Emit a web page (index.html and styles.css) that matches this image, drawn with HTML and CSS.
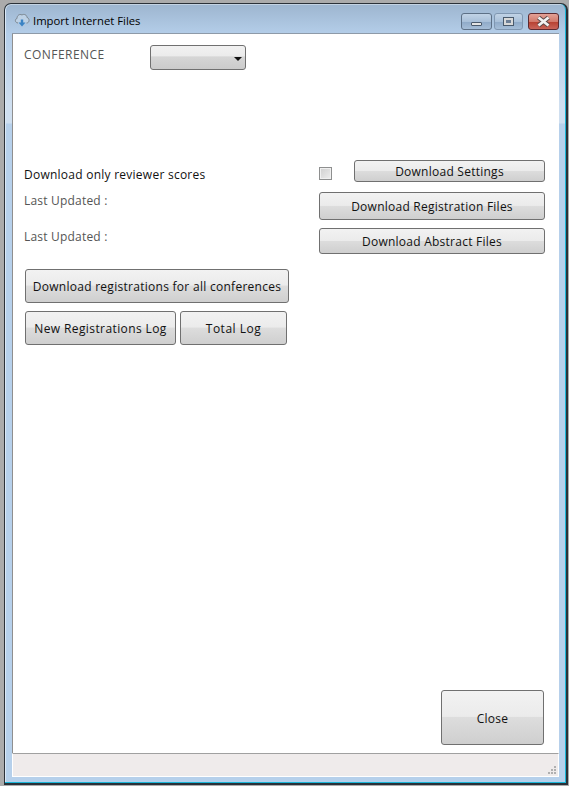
FILE: index.html
```html
<!DOCTYPE html>
<html lang="en">
<head>
    <meta charset="UTF-8">
    <meta name="viewport" content="width=device-width, initial-scale=1.0">
    <title>Import Internet Files</title>
    <link rel="stylesheet" href="styles.css">
</head>
<body>
    <div class="window">
        <div class="titlebar">
            <svg class="app-icon" width="16" height="16" viewBox="0 0 16 16">
                <path d="M4 11 C1 11 .5 7 3 6.5 C3 3.5 5.5 1.5 8 3 C10 1.5 13 3 13 5.500 C15.800 6 15.800 11 12.500 11" fill="#bdd1e5" stroke="#7b858e" stroke-width="1"/>
                <path d="M6.800 7.500 H9.200 V10.500 H11.500 L8 14.500 L4.500 10.500 H6.800 Z" fill="#3a83c4"/>
            </svg>
            <span class="title">Import Internet Files</span>
            <div class="caption-btns">
                <div class="cap-btn cap-min"><span class="min-glyph"></span></div>
                <div class="cap-btn cap-max"><span class="max-glyph"></span></div>
                <div class="cap-btn cap-close"><svg width="17" height="11" viewBox="0 0 17 11"><path d="M3.500 1.500 L13.500 9.500 M13.500 1.500 L3.500 9.500" stroke="#5a4a4a" stroke-width="4.600"/><path d="M3.500 1.500 L13.500 9.500 M13.500 1.500 L3.500 9.500" stroke="#f2f2f2" stroke-width="2.800"/></svg></div>
            </div>
        </div>

        <div class="client">
            <div class="content">
                <div class="conf-row">
                    <label class="label conf-label">CONFERENCE</label>
                    <div class="select"><span class="arrow"></span></div>
                </div>

                <div class="main-row">
                    <div class="left-col">
                        <div class="label-dark">Download only reviewer scores</div>
                        <div class="label updated-1">Last Updated :</div>
                        <div class="label updated-2">Last Updated :</div>
                    </div>
                    <div class="right-col">
                        <div class="settings-row">
                            <span class="checkbox"></span>
                            <button class="btn btn-settings">Download Settings</button>
                        </div>
                        <button class="btn btn-reg">Download Registration Files</button>
                        <button class="btn btn-abs">Download Abstract Files</button>
                    </div>
                </div>

                <div class="bulk">
                    <button class="btn btn-all">Download registrations for all conferences</button>
                    <div class="log-row">
                        <button class="btn btn-new">New Registrations Log</button>
                        <button class="btn btn-total">Total Log</button>
                    </div>
                </div>

                <div class="footer">
                    <button class="btn btn-close">Close</button>
                </div>
            </div>
            <div class="statusbar">
                <svg class="grip" width="10" height="10" viewBox="0 0 10 10" fill="#b0b0b0">
                    <rect x="7" y="1" width="2" height="2"/>
                    <rect x="4" y="4" width="2" height="2"/><rect x="7" y="4" width="2" height="2"/>
                    <rect x="1" y="7" width="2" height="2"/><rect x="4" y="7" width="2" height="2"/><rect x="7" y="7" width="2" height="2"/>
                </svg>
            </div>
        </div>
    </div>
</body>
</html>
```
FILE: styles.css
```css
html, body {
    margin: 0;
    height: 100%;
}
body {
    background: #ababab;
    padding: 3px 1px 0 4px;
    box-sizing: border-box;
    font-family: "Open Sans", "Noto Sans", sans-serif;
    font-size: 12px;
    overflow: hidden;
}
.window {
    height: 782px;
    box-sizing: border-box;
    border: 1px solid #2b3138;
    border-right-width: 2px;
    border-bottom-width: 2px;
    border-radius: 7px 7px 0 0;
    background: linear-gradient(180deg, #9db5cf 0, #b4cee9 30px, #cfdff0 100px, #cfdff0 119px, #b6d0eb 120px);
    padding: 0 7px 6px 7px;
    display: flex;
    flex-direction: column;
    box-shadow: inset 0 -1px 0 #19b6d8, inset -1px 0 0 #19b6d8, inset 1px 0 0 #dbe8f5, inset 0 1px 0 #c4d3e3;
}
.titlebar {
    height: 29px;
    flex: none;
    display: flex;
    align-items: center;
    color: #000;
}
.app-icon {
    margin: 2px 3px 0 2px;
    flex: none;
}
.title {
    font-size: 11.3px;
    margin-top: 4px;
}
.caption-btns {
    margin-left: auto;
    display: flex;
    align-self: flex-start;
    margin-top: 9px;
}
.cap-btn {
    width: 29px;
    height: 15px;
    border: 1px solid #5d7086;
    border-radius: 3px;
    background: linear-gradient(180deg, #c1d3e6 0%, #a9c0d9 50%, #8ea9c7 51%, #a6bed8 100%);
    display: flex;
    align-items: center;
    justify-content: center;
}
.cap-max {
    width: 27px;
    margin-left: 2px;
    border-color: #8097b1;
}
.cap-close {
    margin-left: 5px;
    border-color: #5c2a30;
    background: linear-gradient(180deg, #e3a196 0%, #d27a6c 50%, #b63f2f 51%, #c9655a 100%);
}
.min-glyph {
    width: 9px;
    height: 2px;
    margin-top: 5px;
    background: #e4e4e4;
    border: 1px solid #4a5a6c;
    border-radius: 1px;
}
.max-glyph {
    width: 5px;
    height: 3px;
    border: 2px solid #d8d8d8;
    background: #6d7f96;
    outline: 1px solid #4a5a6c;
}
.client {
    flex: 1;
    display: flex;
    flex-direction: column;
    background: #fff;
    border-top: 1px solid #8e9aa8;
    min-height: 0;
}
.content {
    flex: 1;
    display: flex;
    flex-direction: column;
    padding: 11px 14px 8px 11px;
    border-left: 1px solid #8f8f8f;
    min-height: 0;
}
.label {
    color: #555;
    letter-spacing: 0.2px;
}
.label-dark {
    color: #111;
    letter-spacing: 0.25px;
}
.conf-row {
    display: flex;
    align-items: flex-start;
    height: 91px;
}
.conf-label {
    width: 126px;
    line-height: 18px;
    margin-top: 1px;
    letter-spacing: 0.45px;
}
.select {
    width: 96px;
    height: 25px;
    border: 1px solid #707070;
    border-radius: 3px;
    background: linear-gradient(180deg, #f1f1f1 0%, #ebebeb 45%, #d6d6d6 46%, #cbcbcb 100%);
    display: flex;
    align-items: center;
    justify-content: flex-end;
    padding-right: 3px;
    box-sizing: border-box;
}
.arrow {
    width: 0;
    height: 0;
    border-left: 4px solid transparent;
    border-right: 4px solid transparent;
    border-top: 4px solid #111;
    margin-top: 2px;
}
.main-row {
    display: flex;
    justify-content: space-between;
    margin-top: 24px;
}
.left-col {
    padding-top: 6px;
    line-height: 18px;
}
.updated-1 {
    margin-top: 8px;
}
.updated-2 {
    margin-top: 18px;
}
.right-col {
    width: 226px;
    display: flex;
    flex-direction: column;
}
.settings-row {
    display: flex;
    justify-content: space-between;
    align-items: center;
    height: 22px;
}
.checkbox {
    width: 11px;
    height: 11px;
    border: 1px solid #8e8f8f;
    background: linear-gradient(135deg, #cfcfcf, #eeeeee);
    box-shadow: inset 0 0 0 1px #f0f0f0;
    margin-top: 5px;
}
.btn {
    font-family: inherit;
    font-size: 12px;
    color: #111;
    letter-spacing: 0.25px;
    border: 1px solid #707070;
    border-radius: 3px;
    padding: 0;
    background: linear-gradient(180deg, #f2f2f2 0%, #ebebeb 48%, #dddddd 49%, #cfcfcf 100%);
    white-space: nowrap;
    box-sizing: border-box;
}
.btn-settings {
    width: 191px;
    height: 22px;
}
.btn-reg {
    width: 226px;
    height: 28px;
    margin-top: 10px;
}
.btn-abs {
    width: 226px;
    height: 26px;
    margin-top: 8px;
}
.bulk {
    margin-top: 15px;
    margin-left: 1px;
}
.btn-all {
    width: 264px;
    height: 34px;
    display: block;
    letter-spacing: 0.28px;
}
.log-row {
    display: flex;
    gap: 4px;
    margin-top: 8px;
}
.btn-new {
    width: 151px;
    height: 34px;
    letter-spacing: 0.4px;
}
.btn-total {
    width: 107px;
    height: 34px;
    letter-spacing: 0.5px;
}
.footer {
    margin-top: auto;
    margin-right: 1px;
    display: flex;
    justify-content: flex-end;
}
.btn-close {
    width: 103px;
    height: 55px;
    padding-top: 2px;
}
.statusbar {
    height: 24px;
    flex: none;
    box-sizing: border-box;
    background: #efebeb;
    border-top: 1px solid #a0a0a0;
    border-left: 1px solid #fff;
    border-right: 1px solid #fff;
    border-bottom: 1px solid #fff;
    display: flex;
    justify-content: flex-end;
    align-items: flex-end;
}
.grip {
    margin: 0 1px 1px 0;
}
```
